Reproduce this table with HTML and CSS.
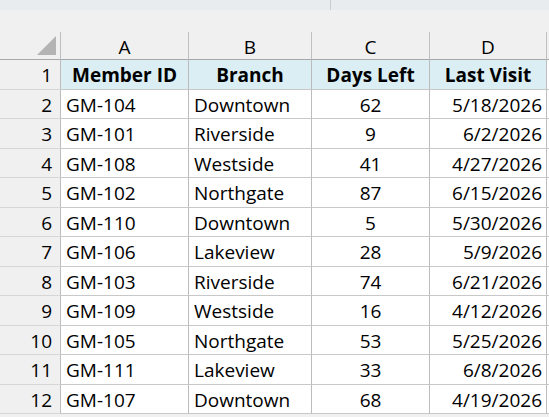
FILE: index.html
```html
<!DOCTYPE html>
<html>
<head>
<meta charset="utf-8">
<link rel="stylesheet" href="styles.css">
</head>
<body>
<div class="topbar"><div class="topbar-left"></div><div class="topbar-right"></div></div>
<div class="gap"></div>
<div class="sheet">
  <div class="corner"><div class="tri"></div></div>
  <div class="colh">A</div><div class="colh">B</div><div class="colh">C</div><div class="colh">D</div><div class="colh last"></div>

  <div class="rowh">1</div><div class="cell hd">Member ID</div><div class="cell hd">Branch</div><div class="cell hd">Days Left</div><div class="cell hd">Last Visit</div><div class="cell extra"></div>
  <div class="rowh">2</div><div class="cell">GM-104</div><div class="cell">Downtown</div><div class="cell c">62</div><div class="cell r">5/18/2026</div><div class="cell extra"></div>
  <div class="rowh">3</div><div class="cell">GM-101</div><div class="cell">Riverside</div><div class="cell c">9</div><div class="cell r">6/2/2026</div><div class="cell extra"></div>
  <div class="rowh">4</div><div class="cell">GM-108</div><div class="cell">Westside</div><div class="cell c">41</div><div class="cell r">4/27/2026</div><div class="cell extra"></div>
  <div class="rowh">5</div><div class="cell">GM-102</div><div class="cell">Northgate</div><div class="cell c">87</div><div class="cell r">6/15/2026</div><div class="cell extra"></div>
  <div class="rowh">6</div><div class="cell">GM-110</div><div class="cell">Downtown</div><div class="cell c">5</div><div class="cell r">5/30/2026</div><div class="cell extra"></div>
  <div class="rowh">7</div><div class="cell">GM-106</div><div class="cell">Lakeview</div><div class="cell c">28</div><div class="cell r">5/9/2026</div><div class="cell extra"></div>
  <div class="rowh">8</div><div class="cell">GM-103</div><div class="cell">Riverside</div><div class="cell c">74</div><div class="cell r">6/21/2026</div><div class="cell extra"></div>
  <div class="rowh">9</div><div class="cell">GM-109</div><div class="cell">Westside</div><div class="cell c">16</div><div class="cell r">4/12/2026</div><div class="cell extra"></div>
  <div class="rowh">10</div><div class="cell">GM-105</div><div class="cell">Northgate</div><div class="cell c">53</div><div class="cell r">5/25/2026</div><div class="cell extra"></div>
  <div class="rowh">11</div><div class="cell">GM-111</div><div class="cell">Lakeview</div><div class="cell c">33</div><div class="cell r">6/8/2026</div><div class="cell extra"></div>
  <div class="rowh">12</div><div class="cell">GM-107</div><div class="cell">Downtown</div><div class="cell c">68</div><div class="cell r">4/19/2026</div><div class="cell extra"></div>
</div>
</body>
</html>
```
FILE: styles.css
```css
html, body {
  margin: 0;
  padding: 0;
  background: #f0f0f0;
  font-family: "Open Sans", "Noto Sans", sans-serif;
  color: #000;
  overflow: hidden;
}
.topbar {
  height: 10px;
  display: flex;
  background: #e9ecef;
}
.topbar-left {
  width: 330px;
  border-right: 1px solid #c9cdd2;
}
.topbar-right {
  flex: 1;
}
.gap {
  height: 22px;
}
.sheet {
  display: grid;
  grid-template-columns: 61px 128px 123px 118px 117px 1fr;
  grid-template-rows: 28px repeat(12, 29.5px);
  font-size: 19px;
}
.corner {
  border-right: 1px solid #bdbdbd;
  border-bottom: 1px solid #a8a8a8;
  display: flex;
  justify-content: flex-end;
  align-items: flex-end;
  padding: 0 4px 4px 0;
}
.tri {
  width: 0;
  height: 0;
  border-left: 19px solid transparent;
  border-bottom: 19px solid #b4b4b4;
}
.colh {
  border-right: 1px solid #c0c0c0;
  border-bottom: 1px solid #a8a8a8;
  display: flex;
  align-items: center;
  justify-content: center;
  padding-top: 3px;
}
.colh.last {
  border-right: none;
}
.rowh {
  border-right: 1px solid #bdbdbd;
  border-bottom: 1px solid #d6d6d6;
  display: flex;
  align-items: center;
  justify-content: flex-end;
  padding: 2px 8px 0 0;
}
.cell {
  background: #fff;
  border-right: 1px solid #bcbcbc;
  border-bottom: 1px solid #c8c8c8;
  display: flex;
  align-items: center;
  padding: 2px 5px 0;
  white-space: nowrap;
  overflow: hidden;
}
.cell.hd {
  background: #daeef3;
  font-weight: 700;
  justify-content: center;
}
.cell.c {
  justify-content: center;
}
.cell.r {
  justify-content: flex-end;
  padding-right: 4px;
}
.cell.extra {
  border-right: none;
  padding: 0;
}
```
